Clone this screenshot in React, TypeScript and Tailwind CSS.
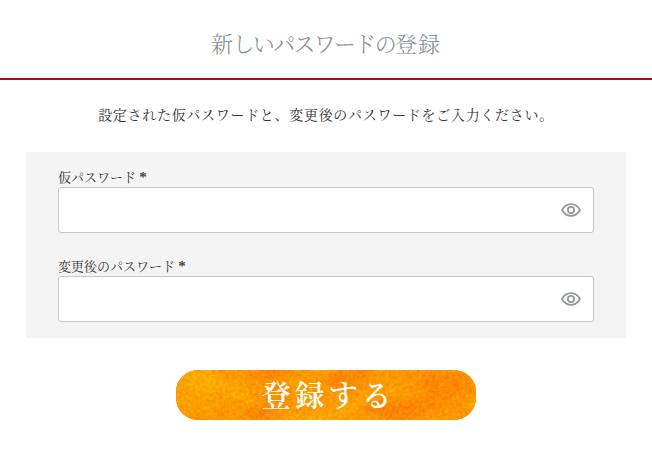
const fields = [
  { id: "temp-password", label: "仮パスワード" },
  { id: "new-password", label: "変更後のパスワード" },
];

function EyeIcon() {
  return (
    <svg width="20" height="14" viewBox="0 0 20 14" fill="none" stroke="#93979a">
      <path d="M1 7C3.2 3.1 6.3 1.1 10 1.1S16.8 3.1 19 7C16.8 10.9 13.7 12.9 10 12.9S3.2 10.9 1 7Z" strokeWidth="1.8" />
      <circle cx="10" cy="7" r="3.1" strokeWidth="1.8" />
    </svg>
  );
}

// Warm paint wash: broad blotches, then a fine grain over them
function PaintTexture() {
  return (
    <svg className="absolute inset-0" width="300" height="50">
      <defs>
        <filter id="blotch" x="0" y="0" width="100%" height="100%" colorInterpolationFilters="sRGB">
          <feTurbulence type="fractalNoise" baseFrequency="0.025 0.035" numOctaves="3" seed="8" />
          <feColorMatrix values="0 0 0 0 0.99  0.45 0 0 0 0.37  0 0 0 0 0  0 0 0 0 1" />
        </filter>
        <filter id="grain" x="0" y="0" width="100%" height="100%" colorInterpolationFilters="sRGB">
          <feTurbulence type="fractalNoise" baseFrequency="0.3" numOctaves="3" seed="5" />
          <feColorMatrix values="0 0 0 0 0.98  0.6 0 0 0 0.3  0 0 0 0 0.02  0 0 0 0 0.35" />
        </filter>
        <radialGradient id="glow">
          <stop offset="0" stopColor="#ffb800" stopOpacity="0.6" />
          <stop offset="1" stopColor="#ffb800" stopOpacity="0" />
        </radialGradient>
        <radialGradient id="ember">
          <stop offset="0" stopColor="#f87500" stopOpacity="0.5" />
          <stop offset="1" stopColor="#f87500" stopOpacity="0" />
        </radialGradient>
      </defs>
      <rect width="300" height="50" filter="url(#blotch)" />
      <ellipse cx="22" cy="20" rx="40" ry="30" fill="url(#glow)" />
      <ellipse cx="150" cy="50" rx="70" ry="16" fill="url(#glow)" />
      <ellipse cx="75" cy="10" rx="30" ry="20" fill="url(#ember)" />
      <ellipse cx="265" cy="34" rx="60" ry="28" fill="url(#ember)" />
      <rect width="300" height="50" filter="url(#grain)" />
    </svg>
  );
}

function PasswordField({ id, label }: { id: string; label: string }) {
  return (
    <div>
      <label htmlFor={id} className="block h-[19px] text-[13px] leading-[17px] text-[#333]">
        {label} <span className="font-['Liberation_Serif'] text-[15px] leading-none font-bold text-[#444]">*</span>
      </label>
      <div className="flex h-[46px] items-center rounded-[3px] border border-[#c8c8c8] bg-white pr-3">
        <input id={id} type="password" className="h-full min-w-0 flex-1 px-3 outline-none" />
        <button type="button" aria-label="表示">
          <EyeIcon />
        </button>
      </div>
    </div>
  );
}

export default function App() {
  return (
    <main className="h-[476px] overflow-hidden bg-white font-['Noto_Serif_CJK_JP','Noto_Sans_CJK_JP',serif]">
      <header className="h-20 border-b-2 border-[#a50d12] pt-[27px]">
        <h1 className="text-center text-[22px] leading-8 font-light whitespace-nowrap text-[#848d96]">
          <span className="tracking-[-0.5px]">新</span>
          <span className="tracking-[-1.7px]">しいパスワードの</span>
          <span className="tracking-[1px]">登録</span>
        </h1>
      </header>

      <p className="mt-[22px] text-center text-sm leading-6 tracking-[0.7px] whitespace-nowrap text-[#333]">
        設定された仮パスワードと、変更後のパスワードをご入力ください。
      </p>

      <form>
        <div className="mx-[26px] mt-[26px] flex h-[186px] flex-col gap-6 bg-[#f4f4f4] px-8 pt-4">
          {fields.map((field) => (
            <PasswordField key={field.id} {...field} />
          ))}
        </div>

        <button
          type="submit"
          className="relative mx-auto mt-8 block h-[50px] w-[300px] overflow-hidden rounded-[22px] bg-[#fb9905]"
        >
          <PaintTexture />
          <span className="relative block h-[50px] pl-[5px] text-[29.5px] leading-[46px] font-semibold tracking-[4px] text-white">
            登録する
          </span>
        </button>
      </form>
    </main>
  );
}
